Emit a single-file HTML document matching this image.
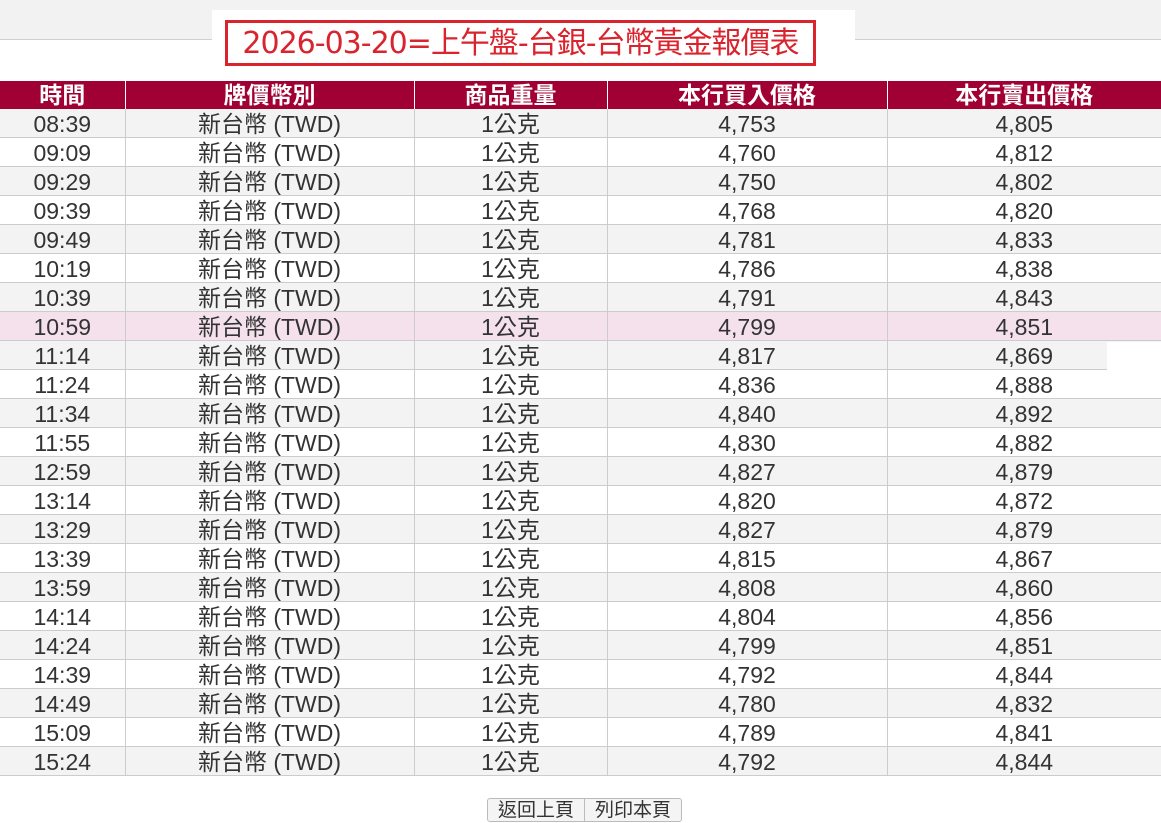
<!DOCTYPE html>
<html><head><meta charset="utf-8"><style>
body{margin:0;width:1161px;height:807px;overflow:hidden;background:#fff;font-family:"Liberation Sans","Noto Sans CJK TC",sans-serif;position:relative}
.top{position:absolute;left:0;top:0;width:1161px;height:39px;background:#f2f2f2;border-bottom:1px solid #d0d0d0}
.tbox{position:absolute;left:212px;top:10px;width:643px;height:60px;background:#fff}
.title{position:absolute;left:225px;top:20px;width:585px;height:40px;border:3px solid #d9232d;color:#d9232d;font-size:30px;line-height:42px;text-align:center;font-family:"DejaVu Sans","Noto Sans CJK TC",sans-serif;letter-spacing:-1px;white-space:nowrap}
table{position:absolute;left:0;top:81px;width:1161px;border-collapse:collapse;table-layout:fixed}
td,th{height:28px;padding:0;text-align:center;font-size:23px;color:#333;border:1px solid #ccc;border-top:none;line-height:28px;overflow:hidden;white-space:nowrap}
td div,th div{height:28px;line-height:30px;overflow:hidden}
th{background:#a00033;color:#fff;font-weight:bold;border-color:#fff;border-bottom:none}
th div{line-height:28px}
tr:nth-child(even) td{background:#f3f3f3}
tr:nth-child(odd) td{background:#fff}
tr.hl td{background:#f5e1ec}
td:first-child,th:first-child{border-left:none}td:last-child,th:last-child{border-right:none}
.cover{position:absolute;left:1107px;top:342px;width:54px;height:28px;background:#fff}
.btns{position:absolute;left:487px;top:798px;height:22px;border:1px solid #bbb;border-radius:3px;background:#f4f4f4;font-size:19px;line-height:24px;color:#333;display:flex}
.btns span{padding:0 10px}.btns span+span{border-left:1px solid #bbb}
</style></head><body>
<div class="top"></div><div class="tbox"></div>
<div class="title">2026-03-20=上午盤-台銀-台幣黃金報價表</div>
<table>
<colgroup><col style="width:125px"><col style="width:289px"><col style="width:193px"><col style="width:280px"><col style="width:274px"></colgroup>
<tr><th><div>時間</div></th><th><div>牌價幣別</div></th><th><div>商品重量</div></th><th><div>本行買入價格</div></th><th><div>本行賣出價格</div></th></tr>
<tr><td><div>08:39</div></td><td><div>新台幣 (TWD)</div></td><td><div>1公克</div></td><td><div>4,753</div></td><td><div>4,805</div></td></tr>
<tr><td><div>09:09</div></td><td><div>新台幣 (TWD)</div></td><td><div>1公克</div></td><td><div>4,760</div></td><td><div>4,812</div></td></tr>
<tr><td><div>09:29</div></td><td><div>新台幣 (TWD)</div></td><td><div>1公克</div></td><td><div>4,750</div></td><td><div>4,802</div></td></tr>
<tr><td><div>09:39</div></td><td><div>新台幣 (TWD)</div></td><td><div>1公克</div></td><td><div>4,768</div></td><td><div>4,820</div></td></tr>
<tr><td><div>09:49</div></td><td><div>新台幣 (TWD)</div></td><td><div>1公克</div></td><td><div>4,781</div></td><td><div>4,833</div></td></tr>
<tr><td><div>10:19</div></td><td><div>新台幣 (TWD)</div></td><td><div>1公克</div></td><td><div>4,786</div></td><td><div>4,838</div></td></tr>
<tr><td><div>10:39</div></td><td><div>新台幣 (TWD)</div></td><td><div>1公克</div></td><td><div>4,791</div></td><td><div>4,843</div></td></tr>
<tr class="hl"><td><div>10:59</div></td><td><div>新台幣 (TWD)</div></td><td><div>1公克</div></td><td><div>4,799</div></td><td><div>4,851</div></td></tr>
<tr><td><div>11:14</div></td><td><div>新台幣 (TWD)</div></td><td><div>1公克</div></td><td><div>4,817</div></td><td><div>4,869</div></td></tr>
<tr><td><div>11:24</div></td><td><div>新台幣 (TWD)</div></td><td><div>1公克</div></td><td><div>4,836</div></td><td><div>4,888</div></td></tr>
<tr><td><div>11:34</div></td><td><div>新台幣 (TWD)</div></td><td><div>1公克</div></td><td><div>4,840</div></td><td><div>4,892</div></td></tr>
<tr><td><div>11:55</div></td><td><div>新台幣 (TWD)</div></td><td><div>1公克</div></td><td><div>4,830</div></td><td><div>4,882</div></td></tr>
<tr><td><div>12:59</div></td><td><div>新台幣 (TWD)</div></td><td><div>1公克</div></td><td><div>4,827</div></td><td><div>4,879</div></td></tr>
<tr><td><div>13:14</div></td><td><div>新台幣 (TWD)</div></td><td><div>1公克</div></td><td><div>4,820</div></td><td><div>4,872</div></td></tr>
<tr><td><div>13:29</div></td><td><div>新台幣 (TWD)</div></td><td><div>1公克</div></td><td><div>4,827</div></td><td><div>4,879</div></td></tr>
<tr><td><div>13:39</div></td><td><div>新台幣 (TWD)</div></td><td><div>1公克</div></td><td><div>4,815</div></td><td><div>4,867</div></td></tr>
<tr><td><div>13:59</div></td><td><div>新台幣 (TWD)</div></td><td><div>1公克</div></td><td><div>4,808</div></td><td><div>4,860</div></td></tr>
<tr><td><div>14:14</div></td><td><div>新台幣 (TWD)</div></td><td><div>1公克</div></td><td><div>4,804</div></td><td><div>4,856</div></td></tr>
<tr><td><div>14:24</div></td><td><div>新台幣 (TWD)</div></td><td><div>1公克</div></td><td><div>4,799</div></td><td><div>4,851</div></td></tr>
<tr><td><div>14:39</div></td><td><div>新台幣 (TWD)</div></td><td><div>1公克</div></td><td><div>4,792</div></td><td><div>4,844</div></td></tr>
<tr><td><div>14:49</div></td><td><div>新台幣 (TWD)</div></td><td><div>1公克</div></td><td><div>4,780</div></td><td><div>4,832</div></td></tr>
<tr><td><div>15:09</div></td><td><div>新台幣 (TWD)</div></td><td><div>1公克</div></td><td><div>4,789</div></td><td><div>4,841</div></td></tr>
<tr><td><div>15:24</div></td><td><div>新台幣 (TWD)</div></td><td><div>1公克</div></td><td><div>4,792</div></td><td><div>4,844</div></td></tr>
</table>
<div class="cover"></div>
<div class="btns"><span>返回上頁</span><span>列印本頁</span></div>
</body></html>
